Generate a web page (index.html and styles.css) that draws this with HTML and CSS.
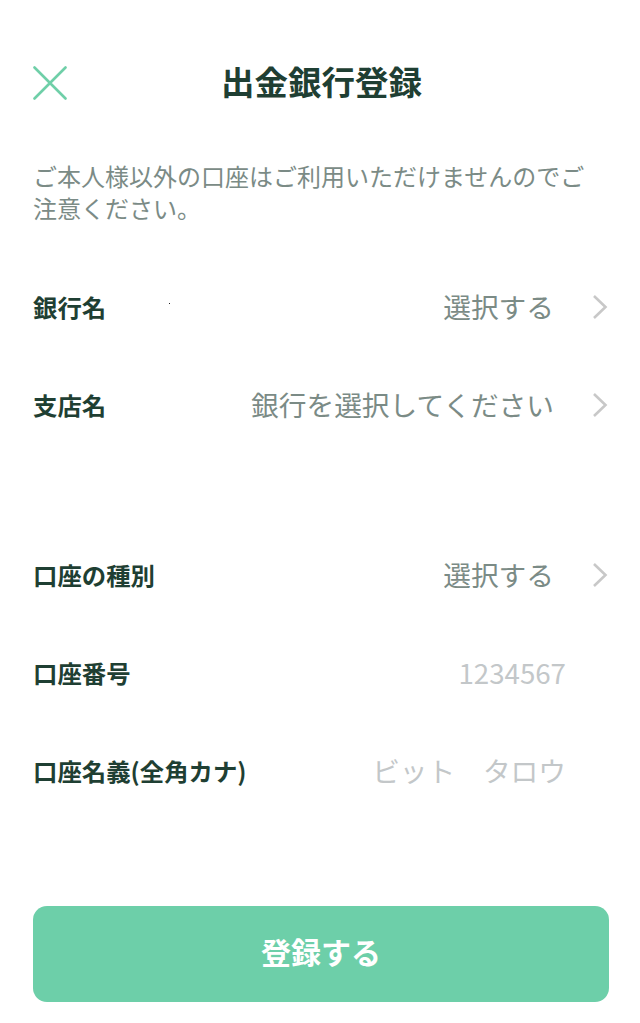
FILE: index.html
```html
<!DOCTYPE html>
<html lang="ja">
<head>
<meta charset="utf-8">
<link rel="stylesheet" href="styles.css">
</head>
<body>
<div class="page">
  <header class="header">
    <svg class="close" width="34" height="34" viewBox="0 0 34 34"><path d="M1.5 1.5 L32.5 32.5 M32.5 1.5 L1.5 32.5" stroke="#6fcfa8" stroke-width="2.6" stroke-linecap="round" fill="none"/></svg>
    <h1 class="title">出金銀行登録</h1>
  </header>
  <p class="notice">ご本人様以外の口座はご利用いただけませんのでご注意ください。</p>
  <div class="rows">
    <div class="row">
      <span class="label">銀行名</span>
      <span class="dot"></span>
      <span class="value select">選択する<svg class="chev" width="16" height="26" viewBox="0 0 16 26"><path d="M2 2 L13.5 13 L2 24" stroke="#c8c8c8" stroke-width="2.6" fill="none"/></svg></span>
    </div>
    <div class="row">
      <span class="label">支店名</span>
      <span class="value select">銀行を選択してください<svg class="chev" width="16" height="26" viewBox="0 0 16 26"><path d="M2 2 L13.5 13 L2 24" stroke="#c8c8c8" stroke-width="2.6" fill="none"/></svg></span>
    </div>
    <div class="spacer"></div>
    <div class="row">
      <span class="label">口座の種別</span>
      <span class="value select">選択する<svg class="chev" width="16" height="26" viewBox="0 0 16 26"><path d="M2 2 L13.5 13 L2 24" stroke="#c8c8c8" stroke-width="2.6" fill="none"/></svg></span>
    </div>
    <div class="row">
      <span class="label">口座番号</span>
      <span class="value placeholder">1234567</span>
    </div>
    <div class="row">
      <span class="label">口座名義(全角カナ)</span>
      <span class="value placeholder">ビット　タロウ</span>
    </div>
  </div>
  <div class="footer">
    <button class="submit">登録する</button>
  </div>
</div>
</body>
</html>
```
FILE: styles.css
```css
* { box-sizing: border-box; }
html, body { margin: 0; padding: 0; background: #fff; }
body {
  font-family: "Noto Sans CJK JP", "Noto Sans", sans-serif;
  width: 640px;
  height: 1023px;
  overflow: hidden;
}
.page {
  padding: 57px 32px 0 33px;
  display: flex;
  flex-direction: column;
}
.header {
  height: 48px;
  display: flex;
  align-items: center;
  justify-content: center;
  position: relative;
}
.close {
  position: absolute;
  left: 0;
  top: 9px;
}
.title {
  margin: 0 0 0 2px;
  font-size: 33.5px;
  font-weight: 700;
  color: #1f3f33;
  line-height: 48px;
}
.notice {
  margin: 55px 0 0 0;
  padding-right: 16px;
  font-size: 24px;
  line-height: 32px;
  color: #7b8b86;
}
.rows {
  margin-top: 33px;
  display: flex;
  flex-direction: column;
}
.row {
  height: 98px;
  display: flex;
  align-items: center;
  justify-content: space-between;
  position: relative;
}
.spacer { height: 72px; }
.label {
  font-size: 24.4px;
  font-weight: 700;
  color: #1f3f33;
}
.dot {
  position: absolute;
  left: 136px;
  top: 46px;
  width: 1px;
  height: 1px;
  background: #222;
}
.value {
  font-size: 27.7px;
  display: flex;
  align-items: center;
}
.select { color: #7b8b86; }
.chev { margin-left: 38px; margin-top: 2px; }
.placeholder {
  color: #c3c7c9;
  margin-right: 42px;
}
.footer {
  margin-top: 87px;
}
.submit {
  width: 576px;
  height: 96px;
  border: none;
  border-radius: 14px;
  background: #6dcfa9;
  color: #fff;
  font-family: "Noto Sans CJK JP", sans-serif;
  font-size: 30px;
  font-weight: 700;
  padding: 0 0 6px 0;
}
```
